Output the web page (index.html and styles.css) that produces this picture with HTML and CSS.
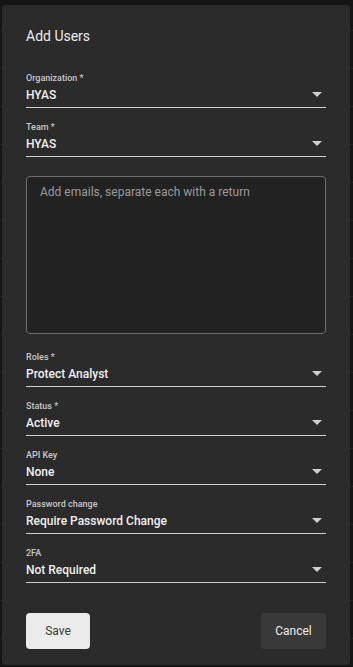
FILE: index.html
```html
<!DOCTYPE html>
<html>
<head>
<meta charset="utf-8">
<link rel="stylesheet" href="styles.css">
</head>
<body>
<div class="backdrop">
  <div class="dialog">
    <h2 class="title">Add Users</h2>
    <div class="field">
      <div class="label">Organization *</div>
      <div class="select"><span>HYAS</span><svg class="arrow" width="10" height="5" viewBox="0 0 10 5"><path d="M0 0L5 5L10 0Z"/></svg></div>
    </div>
    <div class="field">
      <div class="label">Team *</div>
      <div class="select"><span>HYAS</span><svg class="arrow" width="10" height="5" viewBox="0 0 10 5"><path d="M0 0L5 5L10 0Z"/></svg></div>
    </div>
    <textarea class="emails" placeholder="Add emails, separate each with a return"></textarea>
    <div class="field">
      <div class="label">Roles *</div>
      <div class="select"><span>Protect Analyst</span><svg class="arrow" width="10" height="5" viewBox="0 0 10 5"><path d="M0 0L5 5L10 0Z"/></svg></div>
    </div>
    <div class="field">
      <div class="label">Status *</div>
      <div class="select"><span>Active</span><svg class="arrow" width="10" height="5" viewBox="0 0 10 5"><path d="M0 0L5 5L10 0Z"/></svg></div>
    </div>
    <div class="field">
      <div class="label">API Key</div>
      <div class="select"><span>None</span><svg class="arrow" width="10" height="5" viewBox="0 0 10 5"><path d="M0 0L5 5L10 0Z"/></svg></div>
    </div>
    <div class="field">
      <div class="label">Password change</div>
      <div class="select"><span>Require Password Change</span><svg class="arrow" width="10" height="5" viewBox="0 0 10 5"><path d="M0 0L5 5L10 0Z"/></svg></div>
    </div>
    <div class="field">
      <div class="label">2FA</div>
      <div class="select"><span>Not Required</span><svg class="arrow" width="10" height="5" viewBox="0 0 10 5"><path d="M0 0L5 5L10 0Z"/></svg></div>
    </div>
    <div class="actions">
      <button class="btn save">Save</button>
      <button class="btn cancel">Cancel</button>
    </div>
  </div>
</div>
</body>
</html>
```
FILE: styles.css
```css
* { box-sizing: border-box; }
html, body {
  margin: 0;
  padding: 0;
  width: 353px;
  height: 667px;
  overflow: hidden;
  background: #141414;
  font-family: Roboto, "Liberation Sans", sans-serif;
}
.backdrop {
  width: 353px;
  height: 667px;
  padding: 5px 3px 2px 2px;
  background-color: #151515;
  background-image: repeating-linear-gradient(to bottom, transparent 0, transparent 30px, #222222 30px, #222222 31px, transparent 31px, transparent 38px);
}
.dialog {
  width: 348px;
  height: 660px;
  background: #2b2b2b;
  border-radius: 4px;
  padding: 21px 24px 16px 24px;
  display: flex;
  flex-direction: column;
}
.title {
  margin: 0;
  font-size: 14px;
  line-height: 20px;
  font-weight: 400;
  color: #ececec;
  margin-bottom: 26px;
}
.field {
  display: flex;
  flex-direction: column;
  margin-bottom: 13px;
}
.label {
  font-size: 9px;
  line-height: 13px;
  font-weight: 500;
  color: #c8c8c8;
}
.select {
  height: 23px;
  display: flex;
  align-items: center;
  justify-content: space-between;
  border-bottom: 1px solid #cfcfcf;
  font-size: 12px;
  font-weight: 500;
  color: #f0f0f0;
  padding-bottom: 3px;
}
.arrow {
  fill: #cfcfcf;
  margin-right: 4px;
}
.emails {
  display: block;
  width: 300px;
  height: 158px;
  margin: 6px 0 17px 0;
  background: #222222;
  border: 1px solid #6e6e6e;
  border-radius: 4px;
  padding: 8px 13px;
  resize: none;
  font-family: Roboto, "Liberation Sans", sans-serif;
  font-size: 12px;
  line-height: 14px;
  color: #f2f2f2;
  outline: none;
}
.emails::placeholder {
  color: #9a9a9a;
}
.actions {
  display: flex;
  justify-content: space-between;
  margin-top: auto;
}
.btn {
  height: 36px;
  border: none;
  border-radius: 4px;
  font-family: Roboto, "Liberation Sans", sans-serif;
  font-size: 12px;
  font-weight: 400;
}
.save {
  width: 64px;
  background: #ebebeb;
  color: #3a3a3a;
}
.cancel {
  width: 65px;
  background: #393939;
  color: #ececec;
}
```
